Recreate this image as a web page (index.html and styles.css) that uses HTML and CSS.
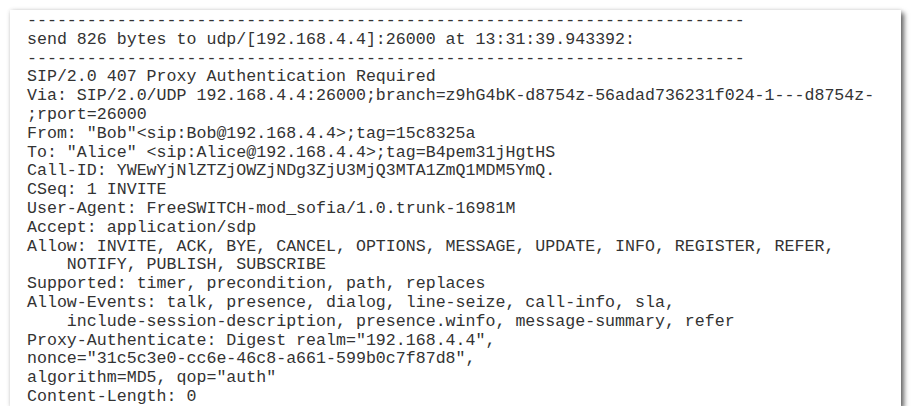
FILE: index.html
```html
<!DOCTYPE html>
<html>
<head>
<meta charset="utf-8">
<link rel="stylesheet" href="styles.css">
</head>
<body>
<div class="box"><pre class="log">------------------------------------------------------------------------
send 826 bytes to udp/[192.168.4.4]:26000 at 13:31:39.943392:
------------------------------------------------------------------------
SIP/2.0 407 Proxy Authentication Required
Via: SIP/2.0/UDP 192.168.4.4:26000;branch=z9hG4bK-d8754z-56adad736231f024-1---d8754z-
;rport=26000
From: "Bob"&lt;sip:Bob@192.168.4.4&gt;;tag=15c8325a
To: "Alice" &lt;sip:Alice@192.168.4.4&gt;;tag=B4pem31jHgtHS
Call-ID: YWEwYjNlZTZjOWZjNDg3ZjU3MjQ3MTA1ZmQ1MDM5YmQ.
CSeq: 1 INVITE
User-Agent: FreeSWITCH-mod_sofia/1.0.trunk-16981M
Accept: application/sdp
Allow: INVITE, ACK, BYE, CANCEL, OPTIONS, MESSAGE, UPDATE, INFO, REGISTER, REFER,
    NOTIFY, PUBLISH, SUBSCRIBE
Supported: timer, precondition, path, replaces
Allow-Events: talk, presence, dialog, line-seize, call-info, sla,
    include-session-description, presence.winfo, message-summary, refer
Proxy-Authenticate: Digest realm="192.168.4.4",
nonce="31c5c3e0-cc6e-46c8-a661-599b0c7f87d8",
algorithm=MD5, qop="auth"
Content-Length: 0</pre></div>
</body>
</html>
```
FILE: styles.css
```css
html, body {
  margin: 0;
  padding: 0;
  background: #ffffff;
}
body {
  padding: 10px 11px 0 10px;
}
.box {
  width: 891px;
  height: 396px;
  box-sizing: border-box;
  background: #ffffff;
  padding: 2px 0 0 17px;
  box-shadow: 3px 3px 5px rgba(0, 0, 0, 0.6), 0 0 4px rgba(0, 0, 0, 0.12);
  overflow: hidden;
}
.log {
  margin: 0;
  font-family: "Courier New", "Nimbus Mono PS", "FreeMono", "Liberation Mono", monospace;
  font-size: 16.62px;
  line-height: 18.8px;
  color: #333333;
  white-space: pre;
}
```
